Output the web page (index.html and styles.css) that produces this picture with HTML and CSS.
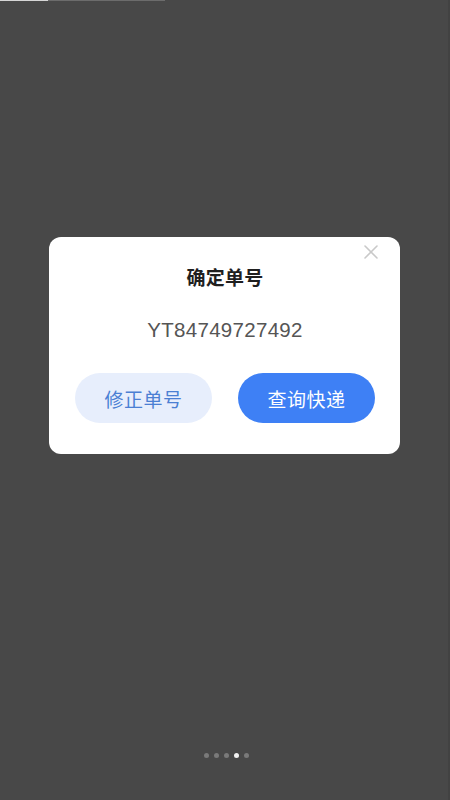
FILE: index.html
```html
<!DOCTYPE html>
<html lang="zh-CN">
<head>
<meta charset="utf-8">
<title>确定单号</title>
<link rel="stylesheet" href="styles.css">
</head>
<body>
<div class="page">
  <div class="topline"><span class="seg-a"></span><span class="seg-b"></span></div>
  <div class="dialog">
    <button class="close" aria-label="关闭">
      <svg width="14" height="14" viewBox="0 0 14 14"><path d="M1 1 L13 13 M13 1 L1 13" stroke="#c9c9c9" stroke-width="1.6" fill="none" stroke-linecap="round"/></svg>
    </button>
    <div class="title">确定单号</div>
    <div class="number">YT84749727492</div>
    <div class="actions">
      <button class="btn btn-light">修正单号</button>
      <button class="btn btn-primary">查询快递</button>
    </div>
  </div>
  <div class="dots">
    <span class="dot"></span><span class="dot"></span><span class="dot"></span><span class="dot active"></span><span class="dot"></span>
  </div>
</div>
</body>
</html>
```
FILE: styles.css
```css
html, body {
  margin: 0;
  padding: 0;
  background: #484848;
}
body {
  font-family: "Noto Sans CJK SC", "Noto Sans", sans-serif;
}
.page {
  height: 800px;
  display: flex;
  flex-direction: column;
  border-right: 2px solid #424242;
  box-sizing: border-box;
}
.topline {
  display: flex;
  height: 1px;
}
.seg-a {
  width: 48px;
  background: #d6d6d6;
}
.seg-b {
  width: 117px;
  background: #6c6c6c;
}
.dialog {
  position: relative;
  margin-top: 236px;
  margin-left: 49px;
  width: 351px;
  height: 217px;
  box-sizing: border-box;
  background: #ffffff;
  border-radius: 12px;
  padding: 27px 25px 0 26px;
  display: flex;
  flex-direction: column;
  align-items: center;
}
.close {
  position: absolute;
  top: 8px;
  right: 22px;
  width: 14px;
  height: 14px;
  padding: 0;
  border: 0;
  background: none;
  display: flex;
}
.title {
  font-size: 19px;
  line-height: 26px;
  font-weight: 700;
  color: #1f1f1f;
  letter-spacing: 0.3px;
}
.number {
  margin-top: 26px;
  font-family: "Liberation Sans", Arial, sans-serif;
  font-size: 20.5px;
  line-height: 28px;
  color: #555555;
  letter-spacing: 0.3px;
}
.actions {
  margin-top: 29px;
  align-self: stretch;
  display: flex;
  gap: 26px;
}
.btn {
  width: 137px;
  height: 50px;
  border: 0;
  border-radius: 25px;
  font-family: "Noto Sans CJK SC", "Noto Sans", sans-serif;
  font-size: 19px;
  letter-spacing: 0.5px;
  padding: 0;
}
.btn-light {
  background: #e7eefc;
  color: #4b7fd3;
}
.btn-primary {
  background: #3e80f5;
  color: #ffffff;
}
.dots {
  margin-top: auto;
  margin-bottom: 42px;
  display: flex;
  justify-content: center;
  gap: 5px;
  padding-left: 4px;
}
.dot {
  width: 5px;
  height: 5px;
  border-radius: 50%;
  background: #7a7a7a;
}
.dot.active {
  background: #f2f2f2;
}
```
